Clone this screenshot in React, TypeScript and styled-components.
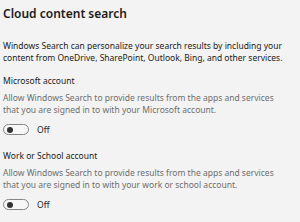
import styled, { createGlobalStyle } from "styled-components";
import { useState } from "react";

const GlobalStyle = createGlobalStyle`
  html, body {
    margin: 0;
    padding: 0;
    background: #f3f3f3;
  }
  body {
    font-family: "Noto Sans", "Open Sans", sans-serif;
    color: #1b1b1b;
  }
`;

const Page = styled.div`
  width: 300px;
  height: 222px;
  padding: 6px 3px 0;
  box-sizing: border-box;
  overflow: hidden;
`;

const Title = styled.h1`
  margin: 0;
  font-size: 12px;
  font-weight: 600;
  line-height: 16px;
`;

const Intro = styled.p`
  margin: 18px 0 0;
  font-size: 8.5px;
  line-height: 12px;
  color: #1b1b1b;
`;

const Section = styled.section`
  margin-top: 11px;
  & + & {
    margin-top: 15px;
  }
`;

const Label = styled.div`
  font-size: 8.5px;
  line-height: 12px;
  color: #1b1b1b;
`;

const Description = styled.p`
  max-width: 282px;
  margin: 5px 0 0;
  font-size: 8.5px;
  line-height: 11.5px;
  color: #6e6e6e;
`;

const ToggleRow = styled.label`
  display: flex;
  align-items: center;
  gap: 8px;
  margin-top: 9px;
  cursor: pointer;
`;

const Track = styled.span<{ $on: boolean }>`
  position: relative;
  width: 24px;
  height: 9px;
  border-radius: 6px;
  border: 1px solid ${(p) => (p.$on ? "#0067c0" : "#858585")};
  background: ${(p) => (p.$on ? "#0067c0" : "#f7f7f7")};
`;

const Knob = styled.span<{ $on: boolean }>`
  position: absolute;
  top: 1.5px;
  left: ${(p) => (p.$on ? "16px" : "3px")};
  width: 6px;
  height: 6px;
  border-radius: 50%;
  background: ${(p) => (p.$on ? "#ffffff" : "#333333")};
`;

const State = styled.span`
  font-size: 8.5px;
  color: #1b1b1b;
`;

type ToggleProps = {
  on: boolean;
  onChange: (value: boolean) => void;
};

const Toggle = ({ on, onChange }: ToggleProps) => (
  <ToggleRow onClick={() => onChange(!on)}>
    <Track $on={on}>
      <Knob $on={on} />
    </Track>
    <State>{on ? "On" : "Off"}</State>
  </ToggleRow>
);

const accounts = [
  {
    label: "Microsoft account",
    description:
      "Allow Windows Search to provide results from the apps and services that you are signed in to with your Microsoft account.",
  },
  {
    label: "Work or School account",
    description:
      "Allow Windows Search to provide results from the apps and services that you are signed in to with your work or school account.",
  },
];

export default function App() {
  const [enabled, setEnabled] = useState<boolean[]>([false, false]);

  return (
    <>
      <GlobalStyle />
      <Page>
        <Title>Cloud content search</Title>
        <Intro>
          Windows Search can personalize your search results by including your
          content from OneDrive, SharePoint, Outlook, Bing, and other services.
        </Intro>
        {accounts.map((account, i) => (
          <Section key={account.label}>
            <Label>{account.label}</Label>
            <Description>{account.description}</Description>
            <Toggle
              on={enabled[i]}
              onChange={(value) =>
                setEnabled((prev) => prev.map((v, j) => (j === i ? value : v)))
              }
            />
          </Section>
        ))}
      </Page>
    </>
  );
}
